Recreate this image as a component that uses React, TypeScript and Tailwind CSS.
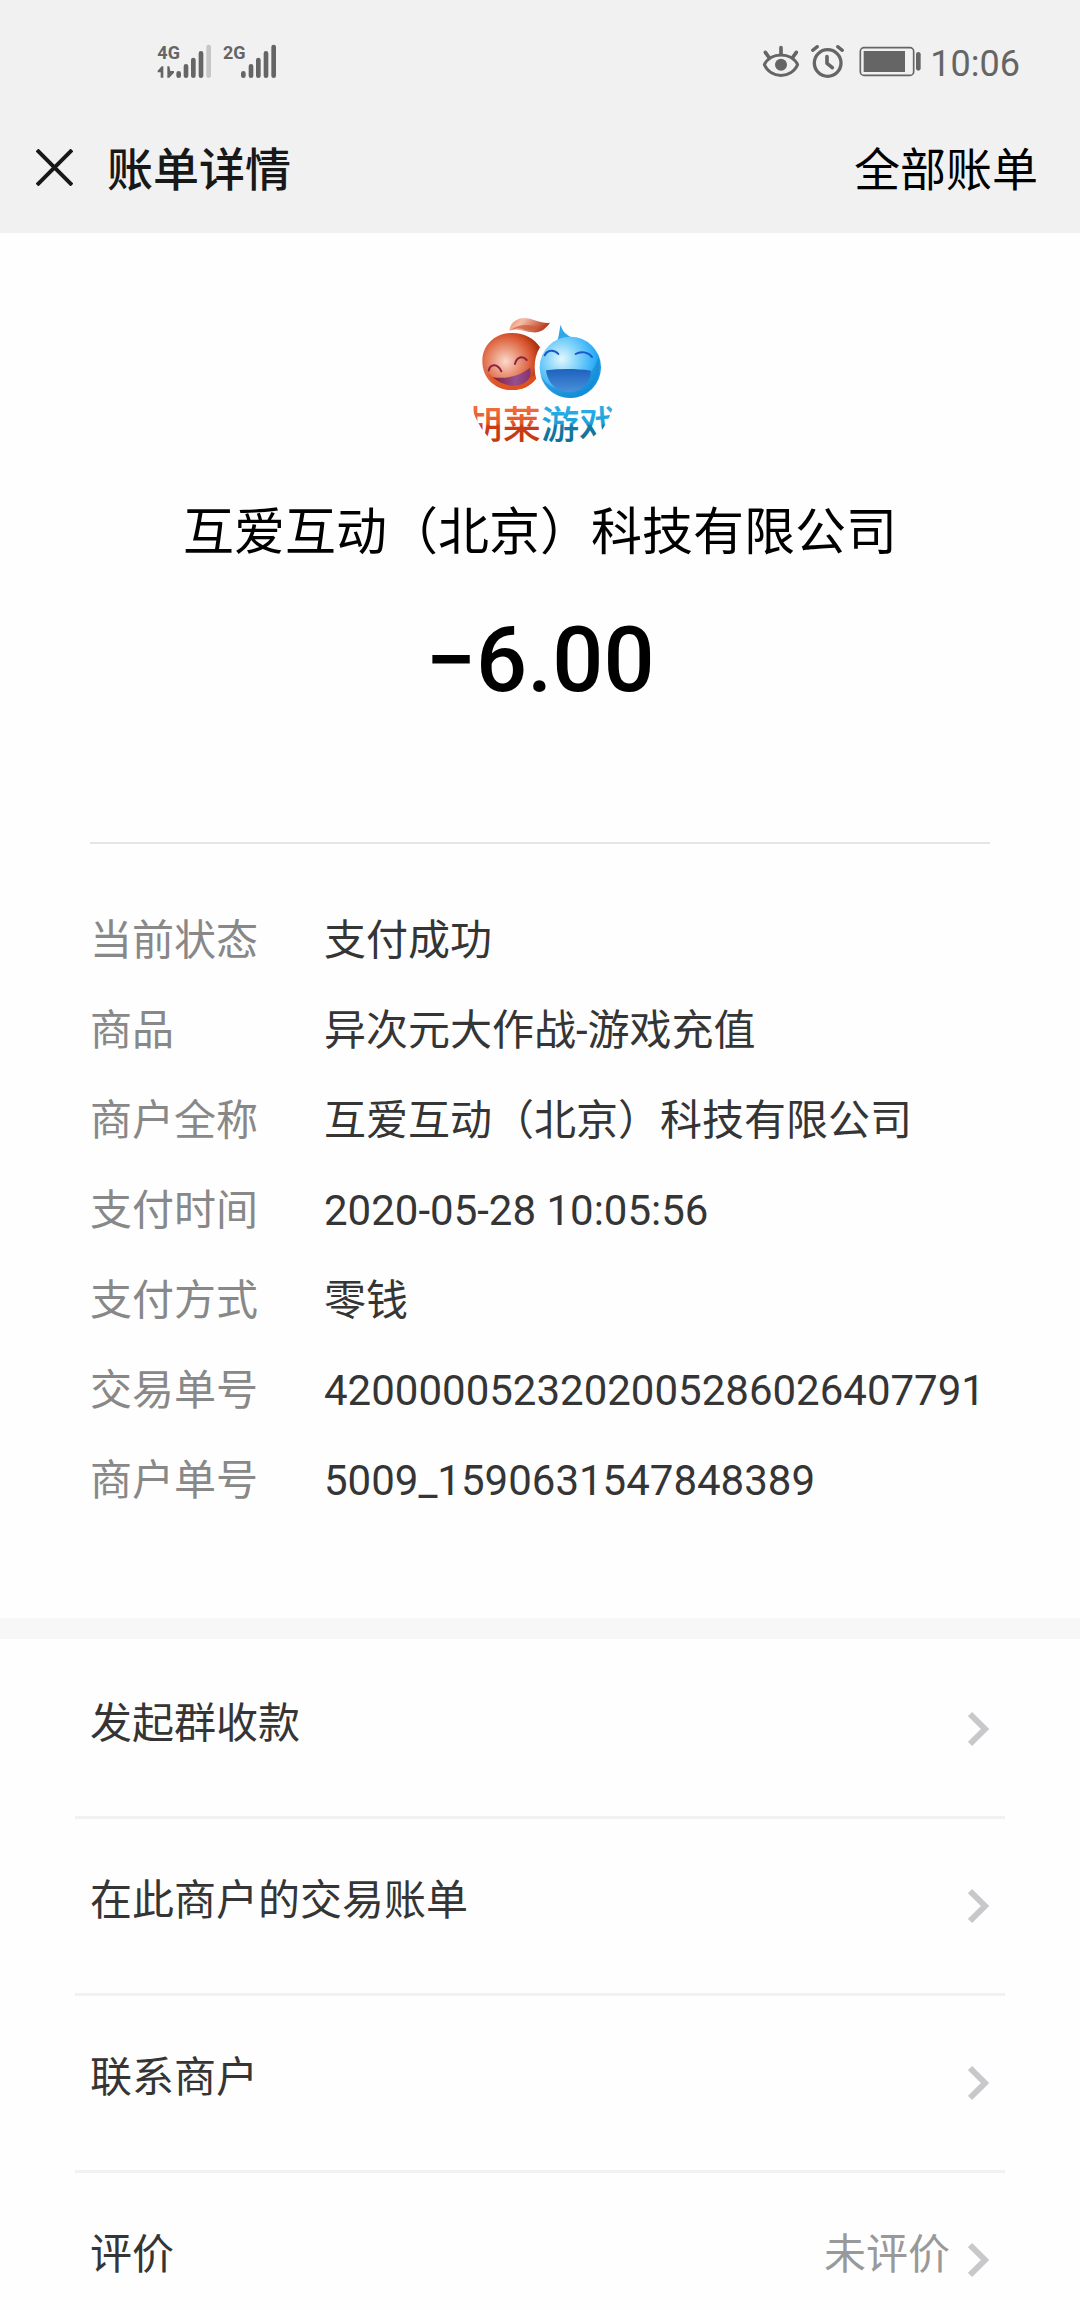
const details = [
  { label: "当前状态", value: "支付成功" },
  { label: "商品", value: "异次元大作战-游戏充值" },
  { label: "商户全称", value: "互爱互动（北京）科技有限公司" },
  { label: "支付时间", value: "2020-05-28 10:05:56" },
  { label: "支付方式", value: "零钱" },
  { label: "交易单号", value: "4200000523202005286026407791" },
  { label: "商户单号", value: "5009_1590631547848389" },
];

const actions = [
  { title: "发起群收款", note: "" },
  { title: "在此商户的交易账单", note: "" },
  { title: "联系商户", note: "" },
  { title: "评价", note: "未评价" },
];

function SignalIcons() {
  return (
    <svg width="160" height="60" viewBox="0 0 480 180" fill="#656565" aria-label="4G 2G">
      <g fontFamily="'Liberation Sans Narrow', Roboto, sans-serif" fontWeight="700" fontSize="54">
        <text x="52" y="88">4G</text>
        <text x="249" y="88">2G</text>
      </g>
      {/* data arrows */}
      <path d="M70 109v34h-8v-16h-9v-5l12-13zM82 109h6l3 14h11v5l-14 15h-6z" />
      <g stroke="#656565" strokeWidth="14" strokeLinecap="round">
        <path d="M116 130v7M138 109v28M160 90v47M183 70v67" />
        <path d="M206 51v86" stroke="#c6c6c6" />
        <path d="M310 130v7M333 109v28M355 90v47M378 70v67M401 51v86" />
      </g>
    </svg>
  );
}

function StatusIcons() {
  return (
    <svg width="174" height="60" viewBox="0 0 522 180" fill="none" stroke="#656565" strokeLinecap="round" aria-hidden="true">
      {/* eye comfort */}
      <path d="M43 104C62 65 124 65 143 104C124 147 62 147 43 104Z" strokeWidth="9" strokeLinejoin="round" />
      <circle cx="93" cy="104" r="18" fill="#656565" stroke="none" />
      <path d="M93 53v20M46 67l10 14M139 67l-10 14" strokeWidth="11" />
      {/* alarm */}
      <circle cx="233" cy="99" r="40" strokeWidth="10" />
      <path d="M231 80v20l16 13" strokeWidth="11" strokeLinejoin="round" />
      <path d="M188 61l14-11M277 61l-14-11" strokeWidth="10" />
      {/* battery */}
      <rect x="331" y="53" width="160" height="83" rx="11" strokeWidth="5" />
      <rect x="341" y="63" width="124" height="63" fill="#656565" stroke="none" />
      <path d="M505 73v42" strokeWidth="14" />
    </svg>
  );
}

function MerchantLogo() {
  return (
    <svg width="200" height="160" viewBox="0 0 600 480" role="img" aria-label="胡莱游戏">
      <defs>
        <radialGradient id="redBall" cx="0.4" cy="0.5" r="0.62">
          <stop offset="0" stopColor="#fbd9cb" />
          <stop offset="0.35" stopColor="#eb9b7f" />
          <stop offset="0.75" stopColor="#d9552f" />
          <stop offset="1" stopColor="#a9300f" />
        </radialGradient>
        <radialGradient id="blueBall" cx="0.36" cy="0.36" r="0.7">
          <stop offset="0" stopColor="#e3f7ff" />
          <stop offset="0.35" stopColor="#8ad6fa" />
          <stop offset="0.75" stopColor="#30b0f8" />
          <stop offset="1" stopColor="#1390dc" />
        </radialGradient>
        <linearGradient id="leaf" x1="0" y1="0" x2="1" y2="0.3">
          <stop offset="0" stopColor="#e98a6a" />
          <stop offset="0.35" stopColor="#f5bda8" />
          <stop offset="1" stopColor="#b8391a" />
        </linearGradient>
        <linearGradient id="redMouth" x1="0" y1="0" x2="1" y2="0">
          <stop offset="0" stopColor="#7d1d3c" />
          <stop offset="0.6" stopColor="#96508f" />
          <stop offset="1" stopColor="#83346a" />
        </linearGradient>
        <linearGradient id="blueMouth" x1="0" y1="0" x2="0" y2="1">
          <stop offset="0" stopColor="#1d62bd" />
          <stop offset="1" stopColor="#4a90da" />
        </linearGradient>
        <linearGradient id="redText" x1="0" y1="318" x2="0" y2="426" gradientUnits="userSpaceOnUse">
          <stop offset="0" stopColor="#f0703d" />
          <stop offset="0.5" stopColor="#e2552a" />
          <stop offset="0.55" stopColor="#c93c18" />
          <stop offset="1" stopColor="#c23a12" />
        </linearGradient>
        <linearGradient id="blueText" x1="0" y1="318" x2="0" y2="426" gradientUnits="userSpaceOnUse">
          <stop offset="0" stopColor="#2bb0ea" />
          <stop offset="0.5" stopColor="#1ea0d8" />
          <stop offset="0.55" stopColor="#137ba5" />
          <stop offset="1" stopColor="#126f97" />
        </linearGradient>
        <clipPath id="round">
          <circle cx="307" cy="264" r="219" />
        </clipPath>
      </defs>

      {/* red face */}
      <path d="M208 92C212 60 242 50 270 56C292 62 312 72 330 68C316 88 300 99 278 97C252 94 232 84 208 92Z" fill="url(#leaf)" />
      <path d="M212 90C240 70 268 74 296 80C282 92 262 92 246 86C234 84 224 86 212 90Z" fill="#cf5a38" opacity="0.7" />
      <path d="M127 184C127 134 166 99 216 99C254 99 284 116 300 142C284 168 280 200 288 236C272 258 246 270 214 270C164 270 127 234 127 184Z" fill="url(#redBall)" />
      <path d="M142 216C176 256 236 258 284 226L288 236C272 258 246 270 214 270C182 270 155 252 142 216Z" fill="#e2531f" opacity="0.85" />
      <path d="M158 232C202 238 242 226 270 203C278 232 262 252 230 257C200 259 176 248 158 232Z" fill="url(#redMouth)" />
      <path d="M146 212C150 192 172 188 184 214M225 192C230 170 248 166 260 180" fill="none" stroke="#8d2144" strokeWidth="6" strokeLinecap="round" />

      {/* blue face */}
      <path d="M362 74C356 98 358 112 350 124L416 118C388 112 368 100 362 74Z" fill="#2fa6e8" />
      <circle cx="391" cy="202" r="92" fill="url(#blueBall)" />
      <path d="M476 172C488 226 456 284 400 293C340 294 310 262 301 224C330 284 430 294 476 172Z" fill="#0e7fc8" opacity="0.5" />
      <path d="M318 211C362 206 410 206 453 212C452 248 426 275 388 277C348 276 322 248 318 211Z" fill="url(#blueMouth)" />
      <path d="M314 166C322 148 344 148 355 162M407 162C422 152 446 156 456 171" fill="none" stroke="#1c57c9" strokeWidth="6" strokeLinecap="round" />

      <g clipPath="url(#round)" fontFamily="'Noto Sans CJK SC', sans-serif" fontSize="114" fontWeight="500">
        <text x="74" y="413" fill="url(#redText)">胡莱</text>
        <text x="304" y="413" fill="url(#blueText)">游戏</text>
      </g>
    </svg>
  );
}

function Chevron() {
  return (
    <svg width="22" height="36" viewBox="0 0 22 36" fill="none" stroke="#c8c8cc" strokeWidth="6" aria-hidden="true">
      <path d="M2 3l15 15L2 33" />
    </svg>
  );
}

export default function App() {
  return (
    <div className="min-h-screen bg-[#fefefe] font-[Roboto,'Noto_Sans_CJK_SC',sans-serif] text-[#353535]">
      <header className="bg-[#f1f1f1]">
        {/* Status bar */}
        <div className="flex items-center justify-between pt-[30px] pb-[17px] pl-[140px] pr-[60px]">
          <SignalIcons />
          <div className="flex items-center gap-1.5">
            <StatusIcons />
            <span className="pt-2 text-4xl text-[#656565]">10:06</span>
          </div>
        </div>

        {/* Title bar */}
        <div className="flex h-[126px] items-center pl-9 pr-[42px] text-[46px] text-black">
          <button type="button" aria-label="关闭" className="mr-[34px] pb-1.5">
            <svg width="37" height="37" viewBox="0 0 37 37" stroke="#181818" strokeWidth="4" aria-hidden="true">
              <path d="M1 1l35 35M36 1L1 36" />
            </svg>
          </button>
          <h1 className="font-medium text-[#181818]">账单详情</h1>
          <a href="#all" className="ml-auto">全部账单</a>
        </div>
      </header>

      <main>
        {/* Merchant and amount */}
        <section className="flex flex-col items-center pt-[67px] text-black">
          <MerchantLogo />
          <h2 className="mt-[43px] text-[51px] leading-[60px]">互爱互动（北京）科技有限公司</h2>
          <p className="mt-12 text-[90px] leading-[100px] font-medium">−6.00</p>
        </section>

        {/* Bill details */}
        <section className="mx-[90px] mt-[131px] border-t-2 border-[#e5e5e5] pt-[52px] pb-[92px]">
          <dl className="text-[42px] leading-[90px]">
            {details.map((item) => (
              <div key={item.label} className="flex">
                <dt className="w-[234px] shrink-0 text-[#888888]">{item.label}</dt>
                <dd className="whitespace-nowrap">{item.value}</dd>
              </div>
            ))}
          </dl>
        </section>

        <div className="h-[21px] bg-[#f7f7f7]" />

        {/* Actions */}
        <nav className="mx-[75px] text-[42px]">
          {actions.map((item) => (
            <a
              key={item.title}
              href="#action"
              className="flex h-[177px] items-center border-t-3 border-[#f1f1f1] px-[15px] first:border-transparent"
            >
              <span className="flex-1 pb-3">{item.title}</span>
              <span className="mr-[18px] pb-3 text-[#999999]">{item.note}</span>
              <Chevron />
            </a>
          ))}
        </nav>
      </main>
    </div>
  );
}
